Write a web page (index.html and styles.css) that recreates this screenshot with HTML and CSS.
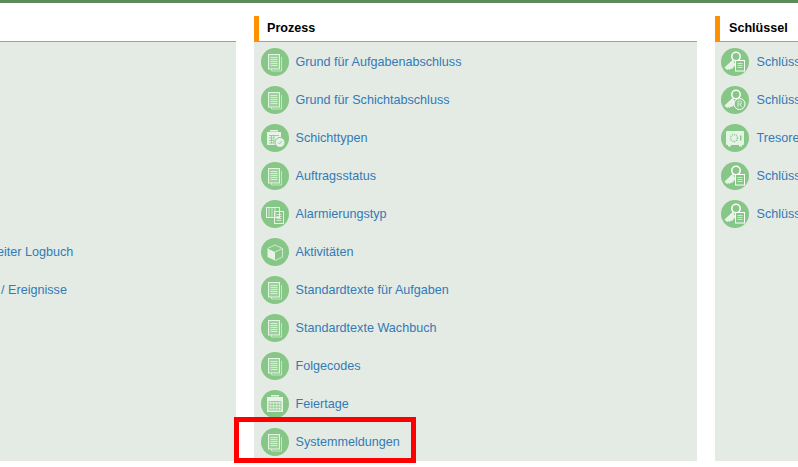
FILE: index.html
```html
<!DOCTYPE html>
<html lang="de">
<head>
    <meta charset="UTF-8">
    <title>Stammdaten</title>
    <link rel="stylesheet" href="styles.css">
</head>
<body>
    <svg class="icon-defs" width="0" height="0">
        <defs>
            <symbol id="i-doc" viewBox="0 0 28 28">
                <path class="thin" d="M20.500 9v14h-10v-2" opacity=".85"/>
                <rect class="page" x="7.500" y="6.500" width="11" height="14.500"/>
                <path class="thin" d="M9.500 9.500h7M9.500 11.500h7M9.500 13.500h7M9.500 15.500h7M9.500 17.500h7"/>
            </symbol>
            <symbol id="i-shift" viewBox="0 0 28 28">
                <rect class="solid" x="6" y="8" width="14" height="13"/>
                <rect class="solid" x="9" y="6" width="8" height="1.500"/>
                <path class="grid" d="M8 11.500h10M8 14h5M8 16.500h5M8 19h5M10.500 11v8.500M13 11v8.500"/>
                <circle cx="19" cy="18.500" r="5" fill="#e8f3e8" stroke="#86c686"/>
                <path class="grid" d="M17 18.500l1.500 1.500 2.500-3"/>
            </symbol>
            <symbol id="i-alarm" viewBox="0 0 28 28">
                <rect class="line" x="5.500" y="7.500" width="13" height="10"/>
                <path class="thin" d="M8 8v9M11 8v9M14 8v9"/>
                <rect class="line" x="13.500" y="11.500" width="9" height="12" fill="#86c686"/>
                <path class="thin" d="M15.500 14.500h5M15.500 16.500h5M15.500 18.500h5M15.500 20.500h5"/>
            </symbol>
            <symbol id="i-cube" viewBox="0 0 28 28">
                <path class="solid" d="M6.500 10.500l7.500 3.500v8.500l-7.500-3.500z"/>
                <path class="thin" d="M14 14l7.500-3.500v8.500l-7.500 3.500M6.500 10.500l7.500-3.500 7.500 3.500"/>
            </symbol>
            <symbol id="i-calendar" viewBox="0 0 28 28">
                <rect class="solid" x="6" y="7" width="16" height="15"/>
                <rect class="solid" x="10" y="5" width="8" height="1.500"/>
                <path class="grid" d="M8 11.500h12v8.500h-12zM8 14.300h12M8 17.100h12M11 11.500v8.500M14 11.500v8.500M17 11.500v8.500"/>
            </symbol>
            <symbol id="i-key-doc" viewBox="0 0 28 28">
                <circle class="key" cx="15" cy="8.500" r="4.200"/>
                <path class="key-bit" d="M12 11.500l-8.500 8 2.500 2.500 1.500-1 1 1 1.500-1.500 1 .5 3.500-4z"/>
                <rect x="14.500" y="12.500" width="9" height="10.500" fill="#86c686" stroke="#fff"/>
                <path class="thin" d="M16.500 15.500h5M16.500 17.500h5M16.500 19.500h5"/>
            </symbol>
            <symbol id="i-key-r" viewBox="0 0 28 28">
                <circle class="key" cx="15" cy="8.500" r="4.200"/>
                <path class="key-bit" d="M12 11.500l-8.500 8 2.500 2.500 1.500-1 1 1 1.500-1.500 1 .5 3.500-4z"/>
                <circle cx="18.500" cy="18" r="5.500" fill="#86c686" stroke="#fff"/>
                <path class="thin" d="M17 21v-6h2a1.500 1.500 0 0 1 0 3h-2M19 18l1.500 3"/>
            </symbol>
            <symbol id="i-safe" viewBox="0 0 28 28">
                <rect class="solid" x="5" y="7" width="18" height="14" rx="1"/>
                <rect class="solid" x="7" y="21" width="3" height="1.500"/>
                <rect class="solid" x="18" y="21" width="3" height="1.500"/>
                <circle cx="13" cy="14" r="3.500" fill="none" stroke="#86c686" stroke-width="1.500" stroke-dasharray="1 1"/>
                <rect x="19" y="11.500" width="1.500" height="5" fill="#86c686"/>
            </symbol>
        </defs>
    </svg>

    <div class="top-bar"></div>

    <div class="columns">
        <section class="column column-left">
            <h2 class="column-title">&nbsp;</h2>
            <div class="column-body">
                <div class="spacer"></div>
                <a class="entry" href="#"><svg class="entry-icon"><use href="#i-doc"/></svg>Standortleiter Logbuch</a>
                <a class="entry" href="#"><svg class="entry-icon"><use href="#i-doc"/></svg>Hinweise / Ereignisse</a>
            </div>
        </section>

        <section class="column column-main">
            <h2 class="column-title">Prozess</h2>
            <div class="column-body">
                <a class="entry" href="#"><svg class="entry-icon"><use href="#i-doc"/></svg>Grund für Aufgabenabschluss</a>
                <a class="entry" href="#"><svg class="entry-icon"><use href="#i-doc"/></svg>Grund für Schichtabschluss</a>
                <a class="entry" href="#"><svg class="entry-icon"><use href="#i-shift"/></svg>Schichttypen</a>
                <a class="entry" href="#"><svg class="entry-icon"><use href="#i-doc"/></svg>Auftragsstatus</a>
                <a class="entry" href="#"><svg class="entry-icon"><use href="#i-alarm"/></svg>Alarmierungstyp</a>
                <a class="entry" href="#"><svg class="entry-icon"><use href="#i-cube"/></svg>Aktivitäten</a>
                <a class="entry" href="#"><svg class="entry-icon"><use href="#i-doc"/></svg>Standardtexte für Aufgaben</a>
                <a class="entry" href="#"><svg class="entry-icon"><use href="#i-doc"/></svg>Standardtexte Wachbuch</a>
                <a class="entry" href="#"><svg class="entry-icon"><use href="#i-doc"/></svg>Folgecodes</a>
                <a class="entry" href="#"><svg class="entry-icon"><use href="#i-calendar"/></svg>Feiertage</a>
                <a class="entry" href="#"><svg class="entry-icon"><use href="#i-doc"/></svg>Systemmeldungen</a>
            </div>
        </section>

        <section class="column column-right">
            <h2 class="column-title">Schlüssel</h2>
            <div class="column-body">
                <a class="entry" href="#"><svg class="entry-icon"><use href="#i-key-doc"/></svg>Schlüsselarten</a>
                <a class="entry" href="#"><svg class="entry-icon"><use href="#i-key-r"/></svg>Schlüsselstatus</a>
                <a class="entry" href="#"><svg class="entry-icon"><use href="#i-safe"/></svg>Tresore</a>
                <a class="entry" href="#"><svg class="entry-icon"><use href="#i-key-doc"/></svg>Schlüsselgruppen</a>
                <a class="entry" href="#"><svg class="entry-icon"><use href="#i-key-doc"/></svg>Schlüsselbund</a>
            </div>
        </section>
    </div>

    <div class="highlight"></div>
</body>
</html>
```
FILE: styles.css
```css
html, body {
    margin: 0;
    height: 100%;
    overflow: hidden;
    background-color: #fff;
}
body {
    font-family: "Liberation Sans", Arial, sans-serif;
    font-size: 12.6px;
    position: relative;
}
.icon-defs {
    position: absolute;
}
.top-bar {
    height: 3px;
    background-color: #5b8a5b;
}
.columns {
    display: flex;
    gap: 18px;
    margin-top: 13px;
    margin-left: -95px;
}
.column {
    flex: none;
    width: 443px;
}
.column-left {
    width: 331px;
}
.column-title {
    margin: 0;
    height: 25px;
    line-height: 24px;
    padding-left: 8px;
    font-size: 12.6px;
    font-weight: bold;
    color: #000;
    border-left: 5px solid #ff9000;
    border-bottom: 1px solid #f09020;
}
.column-left .column-title {
    border-left: 0;
}
.column-right .column-title {
    padding-left: 9px;
}
.column-body {
    height: 419px;
    padding-top: 1px;
    background-color: #e4ebe4;
    box-sizing: border-box;
}
.spacer {
    height: 190px;
}
.entry {
    display: flex;
    align-items: center;
    height: 38px;
    padding-left: 7px;
    color: #337ab7;
    text-decoration: none;
}
.column-right .entry {
    padding-left: 6px;
}
.column-right .entry-icon {
    margin-right: 7.5px;
}
.entry-icon {
    flex: none;
    width: 28px;
    height: 28px;
    margin-right: 6.5px;
    border-radius: 50%;
    background-color: #86c686;
}
.solid {
    fill: #e8f3e8;
}
.page {
    fill: rgba(255, 255, 255, .2);
    stroke: #e8f3e8;
}
.line {
    fill: none;
    stroke: #e8f3e8;
}
.thin {
    fill: none;
    stroke: #e8f3e8;
    stroke-width: .8;
}
.grid {
    fill: none;
    stroke: #86c686;
    stroke-width: .8;
}
.key {
    fill: none;
    stroke: #fff;
    stroke-width: 1.5;
}
.key-bit {
    fill: #e8f3e8;
}
.highlight {
    position: absolute;
    left: 234px;
    top: 417px;
    width: 172px;
    height: 36px;
    border: 5px solid #f00;
}
```
